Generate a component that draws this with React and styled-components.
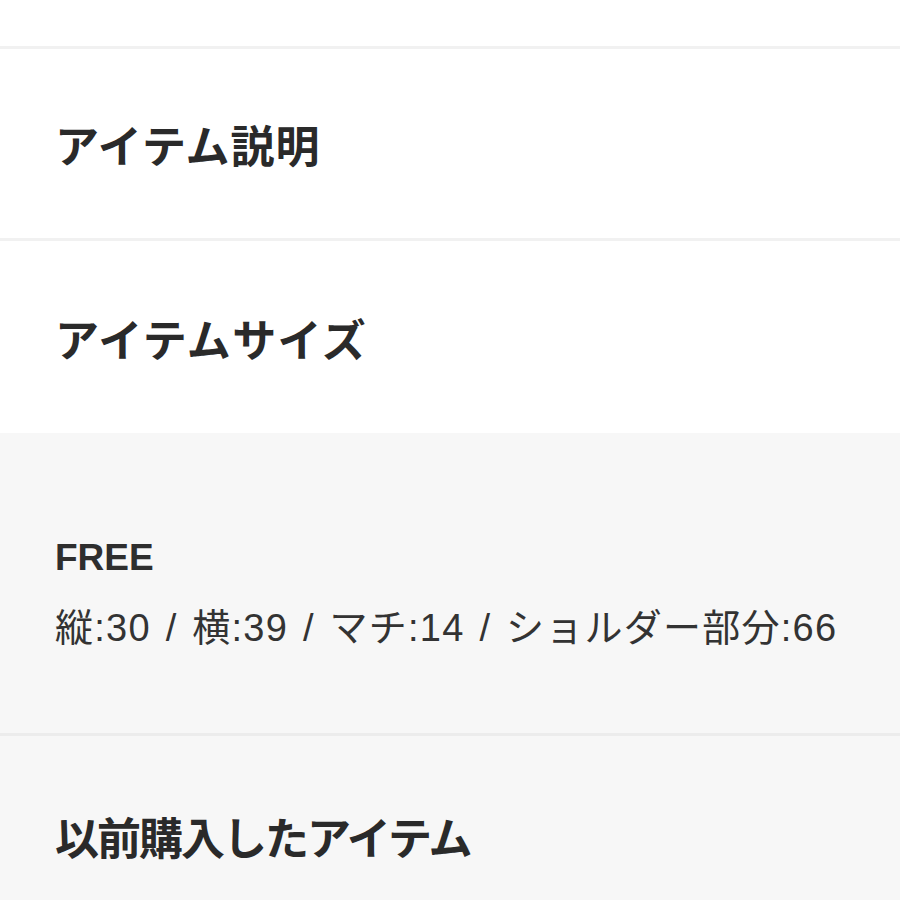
import React from "react";
import styled, { createGlobalStyle } from "styled-components";

const Global = createGlobalStyle`
  html, body { margin: 0; padding: 0; background: #ffffff; }
  body {
    font-family: "Noto Sans CJK JP", "Noto Sans", "Liberation Sans", sans-serif;
    color: #2b2b2b;
    -webkit-font-smoothing: antialiased;
  }
`;

const Page = styled.div`
  width: 900px;
  display: flex;
  flex-direction: column;
`;

const TopSpace = styled.div`
  height: 46px;
  background: #ffffff;
`;

const Divider = styled.div`
  height: 3px;
  background: ${(p) => (p.$onGray ? "#ececec" : "#f1f1f1")};
`;

const Section = styled.section`
  background: ${(p) => (p.$gray ? "#f7f7f7" : "#ffffff")};
  padding: ${(p) => p.$pt}px 55px ${(p) => p.$pb}px;
  display: flex;
  flex-direction: column;
`;

const Heading = styled.h2`
  margin: 0;
  font-size: 44px;
  line-height: 60px;
  font-weight: 700;
  color: #2a2a2a;
  letter-spacing: ${(p) => p.$ls || 0}px;
`;

const SizeLabel = styled.div`
  font-family: "Liberation Sans", "Noto Sans CJK JP", sans-serif;
  font-size: 37px;
  line-height: 50px;
  font-weight: 700;
  color: #2e2e2e;
`;

const SizeText = styled.div`
  margin-top: 20px;
  font-family: "Liberation Sans", "Noto Sans CJK JP", sans-serif;
  font-size: 38px;
  line-height: 50px;
  font-weight: 400;
  color: #333333;
  letter-spacing: 1.25px;
  word-spacing: 3px;
  white-space: nowrap;
`;

export default function App() {
  return (
    <Page>
      <Global />
      <TopSpace />
      <Divider />
      <Section $pt={65} $pb={64}>
        <Heading $ls={1}>アイテム説明</Heading>
      </Section>
      <Divider />
      <Section $pt={67} $pb={65}>
        <Heading $ls={1.4}>アイテムサイズ</Heading>
      </Section>
      <Section $gray $pt={100} $pb={80}>
        <SizeLabel>FREE</SizeLabel>
        <SizeText>縦:30 / 横:39 / マチ:14 / ショルダー部分:66</SizeText>
      </Section>
      <Divider $onGray />
      <Section $gray $pt={70} $pb={62}>
        <Heading $ls={-2}>以前購入したアイテム</Heading>
      </Section>
    </Page>
  );
}
